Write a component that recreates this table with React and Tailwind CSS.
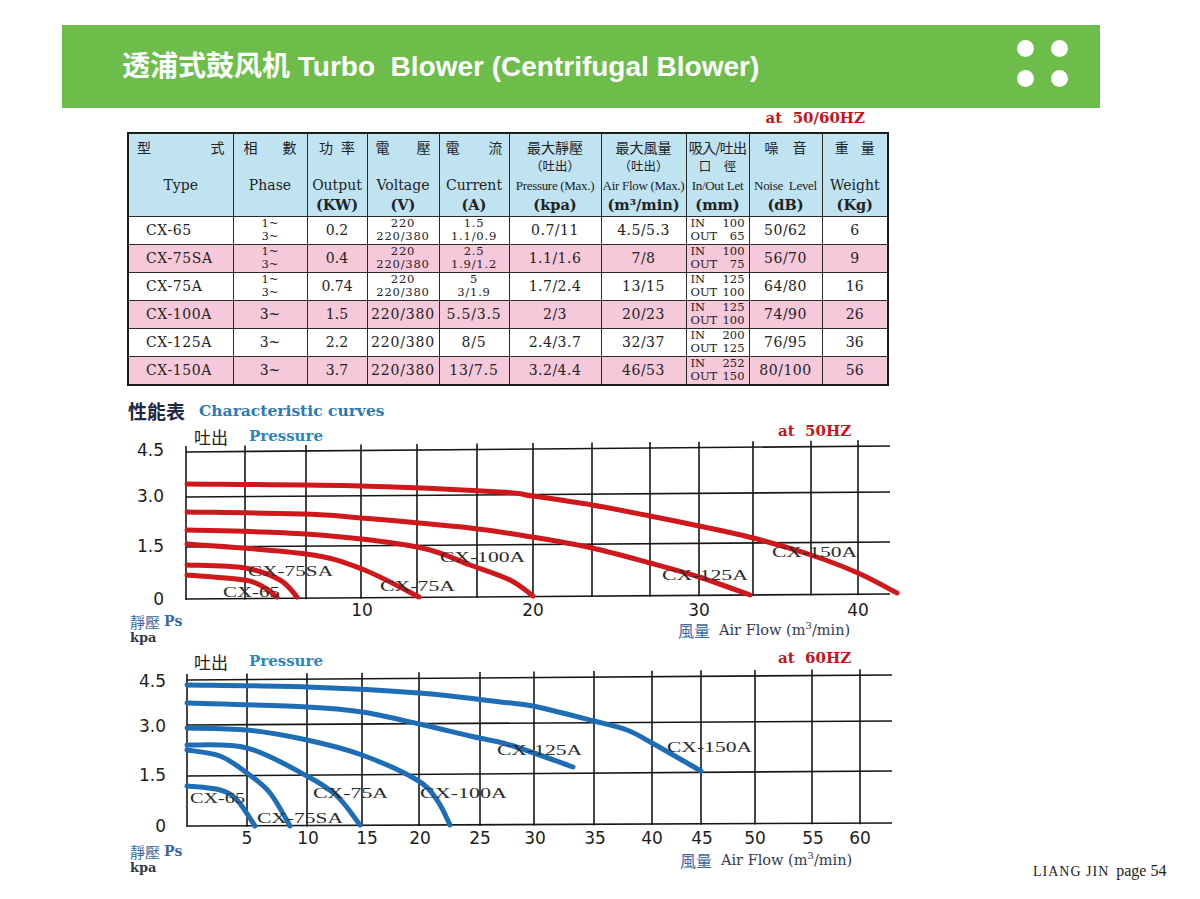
import React from "react";

const serif = { fontFamily: '"DejaVu Serif", "Liberation Serif", "Noto Sans CJK TC", serif' };

const rows = [
  { type: "CX-65", phase: ["1~", "3~"], out: "0.2", volt: ["220", "220/380"], cur: ["1.5", "1.1/0.9"], pres: "0.7/11", flow: "4.5/5.3", io: ["100", "65"], noise: "50/62", wt: "6" },
  { type: "CX-75SA", phase: ["1~", "3~"], out: "0.4", volt: ["220", "220/380"], cur: ["2.5", "1.9/1.2"], pres: "1.1/1.6", flow: "7/8", io: ["100", "75"], noise: "56/70", wt: "9" },
  { type: "CX-75A", phase: ["1~", "3~"], out: "0.74", volt: ["220", "220/380"], cur: ["5", "3/1.9"], pres: "1.7/2.4", flow: "13/15", io: ["125", "100"], noise: "64/80", wt: "16" },
  { type: "CX-100A", phase: "3~", out: "1.5", volt: "220/380", cur: "5.5/3.5", pres: "2/3", flow: "20/23", io: ["125", "100"], noise: "74/90", wt: "26" },
  { type: "CX-125A", phase: "3~", out: "2.2", volt: "220/380", cur: "8/5", pres: "2.4/3.7", flow: "32/37", io: ["200", "125"], noise: "76/95", wt: "36" },
  { type: "CX-150A", phase: "3~", out: "3.7", volt: "220/380", cur: "13/7.5", pres: "3.2/4.4", flow: "46/53", io: ["252", "150"], noise: "80/100", wt: "56" },
];

const widths = [105, 74, 60, 72, 70, 92, 85, 63, 73, 66];

// catmull-rom -> cubic bezier
function smooth(p) {
  let d = `M${p[0][0]},${p[0][1]}`;
  for (let i = 0; i < p.length - 1; i++) {
    const p0 = p[i - 1] || p[i];
    const p1 = p[i];
    const p2 = p[i + 1];
    const p3 = p[i + 2] || p2;
    const c1 = [p1[0] + (p2[0] - p0[0]) / 6, p1[1] + (p2[1] - p0[1]) / 6];
    const c2 = [p2[0] - (p3[0] - p1[0]) / 6, p2[1] - (p3[1] - p1[1]) / 6];
    d += ` C${c1[0]},${c1[1]} ${c2[0]},${c2[1]} ${p2[0]},${p2[1]}`;
  }
  return d;
}

const Stack = ({ v, cls = "" }) =>
  Array.isArray(v) ? (
    <div className={"flex flex-col items-center text-[11.5px] leading-[13.5px] " + cls}>
      <span>{v[0]}</span>
      <span>{v[1]}</span>
    </div>
  ) : (
    <span className={cls}>{v}</span>
  );

const Zh = ({ children, className = "" }) => (
  <div className={"h-[20px] leading-[20px] text-[14px] text-[#222] " + className} style={{ fontFamily: '"Noto Sans CJK TC", sans-serif' }}>
    {children}
  </div>
);

const SpecTable = () => {
  const head = [
    { zh: <Zh className="flex justify-between px-[8px]"><span>型</span><span>式</span></Zh>, en: "Type" },
    { zh: <Zh className="flex justify-between px-[10px]"><span>相</span><span>數</span></Zh>, en: "Phase" },
    { zh: <Zh className="flex justify-center gap-[8px]"><span>功</span><span>率</span></Zh>, en: "Output", unit: "(KW)" },
    { zh: <Zh className="flex justify-between px-[8px]"><span>電</span><span>壓</span></Zh>, en: "Voltage", unit: "(V)" },
    { zh: <Zh className="flex justify-between px-[6px]"><span>電</span><span>流</span></Zh>, en: "Current", unit: "(A)" },
    { zh: <Zh>最大靜壓</Zh>, zh2: "（吐出）", en: "Pressure (Max.)", small: true, unit: "(kpa)" },
    { zh: <Zh>最大風量</Zh>, zh2: "（吐出）", en: "Air Flow (Max.)", small: true, unit: "(m³/min)" },
    { zh: <Zh className="text-[13px] tracking-[-0.8px]">吸入/吐出</Zh>, zh2: "口　徑", en: "In/Out Let", small: true, unit: "(mm)" },
    { zh: <Zh className="flex justify-center gap-[14px]"><span>噪</span><span>音</span></Zh>, en: "Noise  Level", small: true, unit: "(dB)" },
    { zh: <Zh className="flex justify-center gap-[12px]"><span>重</span><span>量</span></Zh>, en: "Weight", unit: "(Kg)" },
  ];
  return (
    <table className="ml-[127px] mt-[6px] w-[760px] table-fixed border-collapse border-2 border-[#1b1b1b] text-[#222]" style={serif}>
      <colgroup>
        {widths.map((w, i) => (
          <col key={i} style={{ width: w }} />
        ))}
      </colgroup>
      <thead>
        <tr className="h-[83px] bg-[#c0e3f2]">
          {head.map((h, i) => (
            <th key={i} className="border border-[#2a2a2a] p-0 align-top font-normal">
              <div className="flex h-[80px] flex-col pt-[3px] text-center">
                {h.zh}
                <div className="h-[18px] text-[12.5px] leading-[18px]" style={{ fontFamily: '"Noto Sans CJK TC", sans-serif' }}>
                  {h.zh2 || ""}
                </div>
                <div
                  className={
                    "h-[21px] whitespace-pre leading-[21px] " +
                    (h.small ? "text-[13px] tracking-[-0.3px]" : "text-[14px]")
                  }
                  style={h.small ? { fontFamily: '"Liberation Serif", serif' } : undefined}
                >
                  {h.en}
                </div>
                <div className="h-[18px] text-[14.5px] font-bold leading-[18px]">{h.unit || ""}</div>
              </div>
            </th>
          ))}
        </tr>
      </thead>
      <tbody>
        {rows.map((r, i) => (
          <tr key={r.type} className={"h-[27px] text-[14px] " + (i % 2 ? "bg-[#f5c8da]" : "bg-white")}>
            <td className="border border-[#2a2a2a] pl-[17px] tracking-[0.6px]">{r.type}</td>
            <td className="border border-[#2a2a2a] text-center">
              <Stack v={r.phase} />
            </td>
            <td className="border border-[#2a2a2a] text-center">{r.out}</td>
            <td className="border border-[#2a2a2a] text-center">
              <Stack v={r.volt} cls="tracking-[0.8px]" />
            </td>
            <td className="border border-[#2a2a2a] text-center">
              <Stack v={r.cur} cls="tracking-[0.8px]" />
            </td>
            <td className="border border-[#2a2a2a] text-center tracking-[0.5px]">{r.pres}</td>
            <td className="border border-[#2a2a2a] text-center tracking-[0.5px]">{r.flow}</td>
            <td className="border border-[#2a2a2a] p-0">
              <div className="flex flex-col px-[4px] text-[11.5px] leading-[13.5px]">
                <div className="flex justify-between"><span>IN</span><span>{r.io[0]}</span></div>
                <div className="flex justify-between"><span>OUT</span><span>{r.io[1]}</span></div>
              </div>
            </td>
            <td className="border border-[#2a2a2a] text-center tracking-[0.5px]">{r.noise}</td>
            <td className="border border-[#2a2a2a] text-center">{r.wt}</td>
          </tr>
        ))}
      </tbody>
    </table>
  );
};

const sansNum = '"DejaVu Sans", "Liberation Sans", sans-serif';
const serifFont = '"DejaVu Serif", "Liberation Serif", serif';
const cjk = '"Noto Sans CJK TC", sans-serif';

const Chart = ({ top, height, c }) => (
  <svg width="800" height={height} viewBox={`110 ${top} 800 ${height}`} className="block shrink-0 overflow-visible">
    {/* title row */}
    <text x="194" y={c.titleY} dominantBaseline="central" fontFamily={cjk} fontSize="17" fill="#222">吐出</text>
    <text x="249" y={c.titleY} dominantBaseline="central" fontFamily={serifFont} fontWeight="bold" fontSize="15" fill="#2a86bd">Pressure</text>
    <text x="778" y={c.hzY} dominantBaseline="central" fontFamily={serifFont} fontWeight="bold" fontSize="15" fill="#c8141b" xmlSpace="preserve">{c.hz}</text>

    {/* grid */}
    {c.h.map(([yl, yr], i) => (
      <line key={"h" + i} x1={c.v[0]} y1={yl} x2={c.right} y2={yr} stroke="#161616" strokeWidth="1.6" />
    ))}
    {c.v.map((x, i) => {
      const t = (x - c.v[0]) / (c.right - c.v[0]);
      const yt = c.h[0][0] + (c.h[0][1] - c.h[0][0]) * t - 6;
      const last = c.h[c.h.length - 1];
      const yb = last[0] + (last[1] - last[0]) * t + 1;
      return <line key={"v" + i} x1={x} y1={yt} x2={x} y2={yb} stroke="#161616" strokeWidth="1.6" />;
    })}

    {/* curves */}
    {c.curves.map((p, i) => (
      <path key={"c" + i} d={smooth(p)} fill="none" stroke={c.color} strokeWidth="5" strokeLinecap="round" />
    ))}

    {/* curve labels */}
    {c.labels.map(([t, x1, x2, y]) => (
      <text key={t} x={x1} y={y} dominantBaseline="central" textLength={x2 - x1} lengthAdjust="spacingAndGlyphs" fontFamily='"Liberation Serif", serif' fontSize="15" fill="#2b2b2b">
        {t}
      </text>
    ))}

    {/* axis numbers */}
    {c.yTicks.map(([t, y]) => (
      <text key={"y" + t} x={c.yRight} y={y} textAnchor="end" dominantBaseline="central" fontFamily={sansNum} fontSize="17" fill="#1d1d1d">{t}</text>
    ))}
    {c.xTicks.map(([t, x]) => (
      <text key={"x" + t} x={x} y={c.xTickY} textAnchor="middle" dominantBaseline="central" fontFamily={sansNum} fontSize="17" fill="#1d1d1d">{t}</text>
    ))}

    {/* axis names */}
    <text x="130" y={c.psY} dominantBaseline="central" fontSize="15" fill="#3b68a3">
      <tspan fontFamily={cjk}>靜壓</tspan>
      <tspan fontFamily={serifFont} fontWeight="bold" fontSize="14" dx="4">Ps</tspan>
    </text>
    <text x="130" y={c.psY + 16} dominantBaseline="central" fontFamily={serifFont} fontWeight="bold" fontSize="13" fill="#333a4a">kpa</text>
    <text x={c.flowX} y={c.flowY} dominantBaseline="central" fontSize="14" fill="#333a55">
      <tspan fontFamily={cjk} fontSize="16" fill="#3b68a3">風量</tspan>
      <tspan fontFamily={serifFont} dx="9" fontSize="14.5">Air Flow (m</tspan>
      <tspan fontFamily={serifFont} fontSize="10" dy="-5">3</tspan>
      <tspan fontFamily={serifFont} fontSize="14.5" dy="5">/min)</tspan>
    </text>
  </svg>
);

const chart50 = {
  hz: "at  50HZ",
  titleY: 433,
  hzY: 428,
  color: "#cf181c",
  right: 890,
  v: [186, 245, 306, 361, 417, 477, 533, 592, 650, 699, 753, 811, 858],
  h: [
    [449, 443],
    [494, 489],
    [544, 539],
    [596, 591],
  ],
  curves: [
    [[187, 481], [361, 483], [500, 489], [532, 493], [592, 502], [650, 513], [699, 523], [753, 535], [811, 552], [858, 570], [897, 590]],
    [[187, 509], [306, 511], [361, 515], [470, 525], [532, 534], [592, 545], [650, 560], [699, 574], [750, 592]],
    [[187, 527], [306, 531], [417, 544], [470, 562], [510, 577], [533, 593]],
    [[187, 541], [306, 551], [362, 566], [419, 594]],
    [[187, 562], [245, 565], [280, 577], [297, 594]],
    [[187, 572], [245, 577], [265, 585], [277, 594]],
  ],
  labels: [
    ["CX-65", 223, 280, 589],
    ["CX-75SA", 248, 333, 568],
    ["CX-75A", 380, 455, 583],
    ["CX-100A", 440, 525, 554],
    ["CX-125A", 662, 748, 572],
    ["CX-150A", 772, 857, 549],
  ],
  yRight: 164,
  yTicks: [["4.5", 447], ["3.0", 493], ["1.5", 543], ["0", 596]],
  xTickY: 607,
  xTicks: [["10", 362], ["20", 533], ["30", 699], ["40", 858]],
  psY: 618,
  flowX: 678,
  flowY: 627,
};

const chart60 = {
  hz: "at  60HZ",
  titleY: 658,
  hzY: 655,
  color: "#1f6eb5",
  right: 892,
  v: [187, 247, 307, 362, 419, 480, 534, 594, 652, 701, 755, 812, 860],
  h: [
    [677, 672],
    [722, 718],
    [773, 768],
    [823, 820],
  ],
  curves: [
    [[187, 682], [307, 684], [419, 690], [500, 699], [533, 703], [594, 718], [627, 727], [652, 740], [701, 768]],
    [[187, 700], [307, 704], [362, 709], [419, 721], [470, 733], [510, 742], [573, 764]],
    [[187, 725], [247, 727], [307, 737], [362, 752], [417, 777], [437, 797], [450, 822]],
    [[187, 742], [247, 745], [307, 773], [337, 793], [360, 822]],
    [[187, 747], [220, 753], [247, 770], [270, 790], [290, 823]],
    [[187, 783], [220, 787], [237, 797], [255, 823]],
  ],
  labels: [
    ["CX-65", 190, 245, 795],
    ["CX-75SA", 257, 343, 815],
    ["CX-75A", 313, 388, 790],
    ["CX-100A", 420, 507, 790],
    ["CX-125A", 497, 582, 747],
    ["CX-150A", 667, 752, 744],
  ],
  yRight: 166,
  yTicks: [["4.5", 678], ["3.0", 723], ["1.5", 772], ["0", 823]],
  xTickY: 835,
  xTicks: [["5", 247], ["10", 308], ["15", 367], ["20", 420], ["25", 480], ["30", 535], ["35", 595], ["40", 652], ["45", 702], ["50", 755], ["55", 813], ["60", 860]],
  psY: 848,
  flowX: 680,
  flowY: 857,
};

export default function App() {
  return (
    <div className="flex h-[899px] w-[1200px] flex-col overflow-hidden bg-white" style={serif}>
      <div className="ml-[62px] mt-[25px] flex h-[83px] w-[1038px] shrink-0 items-center justify-between bg-[#6dbd4b] pl-[60px] pr-[32px]">
        <h1
          className="whitespace-pre text-[28px] font-bold leading-none text-white"
          style={{ fontFamily: '"Liberation Sans", "Noto Sans CJK SC", sans-serif' }}
        >
          透浦式鼓风机 Turbo  Blower (Centrifugal Blower)
        </h1>
        <div className="mb-[7px] grid grid-cols-2 gap-x-[17px] gap-y-[13px]">
          <span className="h-[17px] w-[17px] rounded-full bg-white" />
          <span className="h-[17px] w-[17px] rounded-full bg-white" />
          <span className="h-[17px] w-[17px] rounded-full bg-white" />
          <span className="h-[17px] w-[17px] rounded-full bg-white" />
        </div>
      </div>

      <div className="ml-[127px] mt-[2px] h-[16px] w-[760px] shrink-0 whitespace-pre pr-[22px] text-right text-[15px] font-bold leading-[16px] text-[#c8141b]">
        at  50/60HZ
      </div>

      <SpecTable />

      <div className="ml-[128px] mt-[15px] flex h-[20px] shrink-0 items-center gap-[14px] leading-[20px]">
        <span className="text-[19px] font-bold text-[#1f2845]" style={{ fontFamily: cjk }}>
          性能表
        </span>
        <span className="text-[15.5px] font-bold text-[#2b7bb3]">Characteristic curves</span>
      </div>

      <div className="ml-[110px]">
        <Chart top={418} height={222} c={chart50} />
      </div>

      <div className="ml-[110px] flex items-end">
        <Chart top={640} height={240} c={chart60} />
        <div className="mb-[3px] ml-[123px] whitespace-nowrap leading-[16px] text-[#222]" style={{ fontFamily: '"Liberation Serif", serif' }}>
          <span className="text-[14px] tracking-[1px]">LIANG JIN</span>
          <span className="ml-[7px] text-[16px]">page 54</span>
        </div>
      </div>
    </div>
  );
}
